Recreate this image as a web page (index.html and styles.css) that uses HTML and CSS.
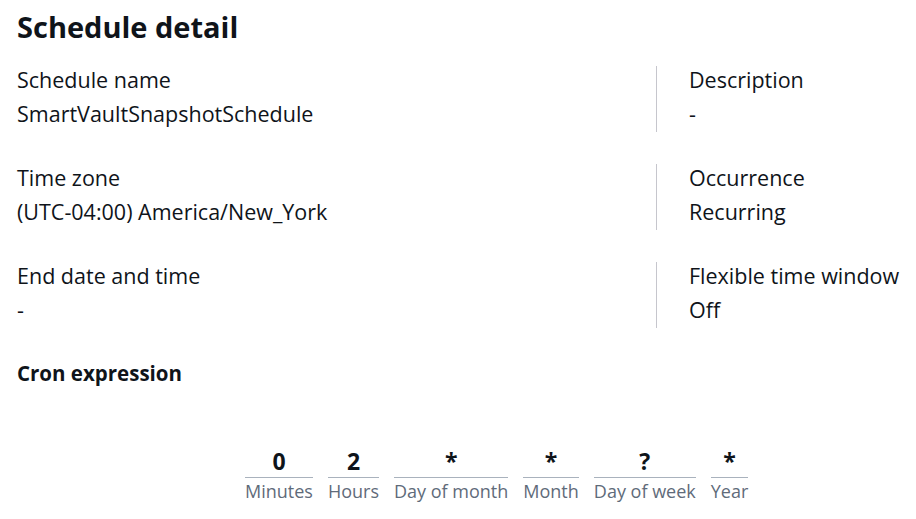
FILE: index.html
```html
<!DOCTYPE html>
<html lang="en">
<head>
    <meta charset="UTF-8">
    <meta name="viewport" content="width=device-width, initial-scale=1.0">
    <title>Schedule detail</title>
    <link rel="stylesheet" href="styles.css">
</head>
<body>
    <div class="container">
        <h1>Schedule detail</h1>

        <div class="details">
            <div class="item">
                <div class="label">Schedule name</div>
                <div class="value">SmartVaultSnapshotSchedule</div>
            </div>
            <div class="item side">
                <div class="label">Description</div>
                <div class="value">-</div>
            </div>

            <div class="item">
                <div class="label">Time zone</div>
                <div class="value">(UTC-04:00) America/New_York</div>
            </div>
            <div class="item side">
                <div class="label">Occurrence</div>
                <div class="value">Recurring</div>
            </div>

            <div class="item">
                <div class="label">End date and time</div>
                <div class="value">-</div>
            </div>
            <div class="item side">
                <div class="label">Flexible time window</div>
                <div class="value">Off</div>
            </div>
        </div>

        <h2>Cron expression</h2>

        <div class="cron">
            <div class="field">
                <div class="field-value">0</div>
                <div class="field-name">Minutes</div>
            </div>
            <div class="field">
                <div class="field-value">2</div>
                <div class="field-name">Hours</div>
            </div>
            <div class="field">
                <div class="field-value">*</div>
                <div class="field-name">Day of month</div>
            </div>
            <div class="field">
                <div class="field-value">*</div>
                <div class="field-name">Month</div>
            </div>
            <div class="field">
                <div class="field-value">?</div>
                <div class="field-name">Day of week</div>
            </div>
            <div class="field">
                <div class="field-value">*</div>
                <div class="field-name">Year</div>
            </div>
        </div>
    </div>
</body>
</html>
```

FILE: styles.css
```css
body {
    font-family: "Open Sans", Arial, sans-serif;
    color: #0f141a;
    background-color: #fff;
    margin: 0;
    padding: 0;
}
.container {
    padding: 8px 17px 0;
}
h1 {
    font-size: 29px;
    line-height: 38px;
    font-weight: 700;
    margin: 0 0 20px;
}
.details {
    display: grid;
    grid-template-columns: 639px 1fr;
    row-gap: 32px;
}
.item {
    height: 66px;
}
.side {
    border-left: 1px solid #c6c6cd;
    padding-left: 32px;
}
.label,
.value {
    font-size: 21.5px;
    white-space: nowrap;
}
.label {
    line-height: 28px;
}
.value {
    line-height: 33px;
    margin-top: 3px;
}
h2 {
    font-size: 20.5px;
    line-height: 30px;
    font-weight: 700;
    margin: 30px 0 0;
}
.cron {
    display: flex;
    gap: 15px;
    margin: 58px 0 0 228px;
}
.field {
    display: flex;
    flex-direction: column;
    align-items: stretch;
}
.field-value {
    text-align: center;
    font-size: 23px;
    line-height: 30px;
    font-weight: 700;
    padding-bottom: 1px;
    border-bottom: 1px solid #a9b2bd;
}
.field-name {
    text-align: center;
    font-size: 18px;
    line-height: 27px;
    color: #5f6b7a;
    white-space: nowrap;
}
```
